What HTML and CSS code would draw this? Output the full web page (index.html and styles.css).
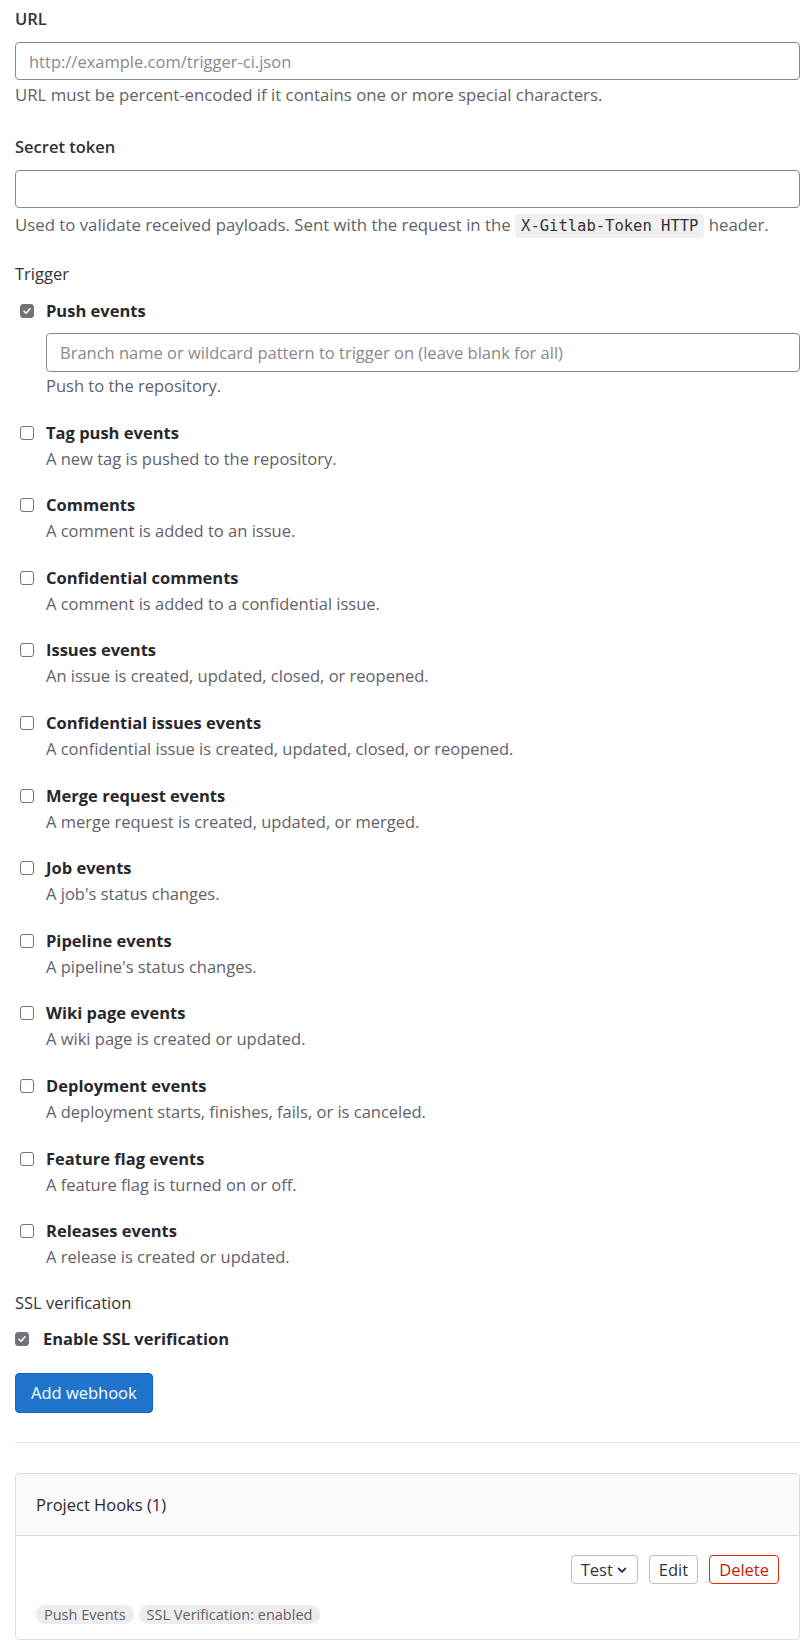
FILE: index.html
```html
<!DOCTYPE html>
<html lang="en">

<head>
    <meta charset="UTF-8">
    <meta name="viewport" content="width=device-width, initial-scale=1.0">
    <title>Webhooks</title>
    <link rel="stylesheet" href="styles.css">
</head>

<body>

    <form class="hook-form">
        <div class="form-group">
            <label class="label" for="url">URL</label>
            <input class="input" type="text" id="url" placeholder="http://example.com/trigger-ci.json">
            <p class="help">URL must be percent-encoded if it contains one or more special characters.</p>
        </div>

        <div class="form-group">
            <label class="label" for="token">Secret token</label>
            <input class="input" type="text" id="token">
            <p class="help">Used to validate received payloads. Sent with the request in the <code>X-Gitlab-Token HTTP</code> header.</p>
        </div>

        <div class="form-group triggers">
            <div class="label">Trigger</div>

            <div class="trigger">
                <input class="check" type="checkbox" id="push" checked>
                <label class="trigger-title" for="push">Push events</label>
                <input class="input branch" type="text" placeholder="Branch name or wildcard pattern to trigger on (leave blank for all)">
                <p class="trigger-desc">Push to the repository.</p>
            </div>

            <div class="trigger">
                <input class="check" type="checkbox" id="tag">
                <label class="trigger-title" for="tag">Tag push events</label>
                <p class="trigger-desc">A new tag is pushed to the repository.</p>
            </div>

            <div class="trigger">
                <input class="check" type="checkbox" id="note">
                <label class="trigger-title" for="note">Comments</label>
                <p class="trigger-desc">A comment is added to an issue.</p>
            </div>

            <div class="trigger">
                <input class="check" type="checkbox" id="conf-note">
                <label class="trigger-title" for="conf-note">Confidential comments</label>
                <p class="trigger-desc">A comment is added to a confidential issue.</p>
            </div>

            <div class="trigger">
                <input class="check" type="checkbox" id="issues">
                <label class="trigger-title" for="issues">Issues events</label>
                <p class="trigger-desc">An issue is created, updated, closed, or reopened.</p>
            </div>

            <div class="trigger">
                <input class="check" type="checkbox" id="conf-issues">
                <label class="trigger-title" for="conf-issues">Confidential issues events</label>
                <p class="trigger-desc">A confidential issue is created, updated, closed, or reopened.</p>
            </div>

            <div class="trigger">
                <input class="check" type="checkbox" id="mr">
                <label class="trigger-title" for="mr">Merge request events</label>
                <p class="trigger-desc">A merge request is created, updated, or merged.</p>
            </div>

            <div class="trigger">
                <input class="check" type="checkbox" id="job">
                <label class="trigger-title" for="job">Job events</label>
                <p class="trigger-desc">A job's status changes.</p>
            </div>

            <div class="trigger">
                <input class="check" type="checkbox" id="pipeline">
                <label class="trigger-title" for="pipeline">Pipeline events</label>
                <p class="trigger-desc">A pipeline's status changes.</p>
            </div>

            <div class="trigger">
                <input class="check" type="checkbox" id="wiki">
                <label class="trigger-title" for="wiki">Wiki page events</label>
                <p class="trigger-desc">A wiki page is created or updated.</p>
            </div>

            <div class="trigger">
                <input class="check" type="checkbox" id="deploy">
                <label class="trigger-title" for="deploy">Deployment events</label>
                <p class="trigger-desc">A deployment starts, finishes, fails, or is canceled.</p>
            </div>

            <div class="trigger">
                <input class="check" type="checkbox" id="flag">
                <label class="trigger-title" for="flag">Feature flag events</label>
                <p class="trigger-desc">A feature flag is turned on or off.</p>
            </div>

            <div class="trigger">
                <input class="check" type="checkbox" id="release">
                <label class="trigger-title" for="release">Releases events</label>
                <p class="trigger-desc">A release is created or updated.</p>
            </div>
        </div>

        <div class="form-group ssl">
            <div class="label">SSL verification</div>
            <div class="ssl-row">
                <input class="check" type="checkbox" id="ssl" checked>
                <label class="trigger-title" for="ssl">Enable SSL verification</label>
            </div>
        </div>

        <button class="btn-primary" type="submit">Add webhook</button>
    </form>

    <hr class="divider">

    <div class="card">
        <div class="card-header">Project Hooks (1)</div>
        <div class="card-body">
            <div class="hook-actions">
                <button class="btn" type="button">Test
                    <svg class="chevron" width="12" height="12" viewBox="0 0 16 16"><path d="M3.5 6 8 10.5 12.5 6" fill="none" stroke="currentColor" stroke-width="2.4" stroke-linecap="round" stroke-linejoin="round"/></svg>
                </button>
                <button class="btn" type="button">Edit</button>
                <button class="btn btn-danger" type="button">Delete</button>
            </div>
            <div class="badges">
                <span class="badge">Push Events</span>
                <span class="badge">SSL Verification: enabled</span>
            </div>
        </div>
    </div>

</body>

</html>
```

FILE: styles.css
```css
body {
    font-family: "Open Sans", Arial, sans-serif;
    font-size: 16.5px;
    line-height: 24px;
    color: #333238;
    margin: 0;
    padding: 7px 10px 0 15px;
}

p {
    margin: 0;
}

.form-group {
    margin-bottom: 28px;
}

.label {
    display: block;
    font-weight: 600;
    margin-bottom: 11px;
}

.input {
    box-sizing: border-box;
    display: block;
    width: 100%;
    height: 38px;
    padding: 0 13px;
    font-family: inherit;
    font-size: 16.5px;
    color: #333238;
    border: 1px solid #89888d;
    border-radius: 4px;
    outline: none;
}

.input::placeholder {
    color: #89888d;
}

.help {
    margin-top: 3px;
    color: #626168;
    font-size: 16.8px;
}

code {
    display: inline-block;
    font-family: "DejaVu Sans Mono", monospace;
    font-size: 15.5px;
    line-height: 24px;
    padding: 0 6px;
    margin: 3px 0 0;
    background: #f0f0f0;
    border-radius: 4px;
    color: #333238;
}

.triggers {
    margin-top: -4px;
    margin-bottom: 0;
}

.triggers .label,
.ssl .label {
    font-weight: 400;
}

.triggers .label {
    margin-bottom: 13px;
}

.trigger {
    display: grid;
    grid-template-columns: 31px 1fr;
    margin-bottom: 22.6px;
}

.check {
    appearance: none;
    box-sizing: border-box;
    width: 14px;
    height: 14px;
    margin: 5px 0 0 5px;
    border: 1px solid #737278;
    border-radius: 3px;
    background: #fff;
}

.check:checked {
    background: #737278 no-repeat center / 10px 10px;
    background-image: url("data:image/svg+xml,%3Csvg xmlns='http://www.w3.org/2000/svg' viewBox='0 0 10 10'%3E%3Cpath d='M2 5.2 4.1 7.3 8 2.8' fill='none' stroke='white' stroke-width='1.6' stroke-linecap='round' stroke-linejoin='round'/%3E%3C/svg%3E");
}

.trigger-title {
    grid-column: 2;
    font-weight: 700;
    color: #28272d;
}

.trigger-desc,
.trigger .branch {
    grid-column: 2;
}

.trigger-desc {
    margin-top: 2px;
    color: #626168;
}

.trigger .branch {
    margin-top: 10px;
    height: 39px;
}

.ssl {
    margin-top: -1px;
    margin-bottom: 22px;
}

.ssl .label {
    margin-bottom: 12px;
}

.ssl-row {
    display: grid;
    grid-template-columns: 28px 1fr;
}

.ssl-row .check {
    margin-left: 0;
}

.btn-primary {
    display: block;
    height: 40px;
    padding: 0 15px;
    font-family: inherit;
    font-size: 16.5px;
    color: #fff;
    background-color: #1f75cb;
    border: 1px solid #1068bf;
    border-radius: 4px;
    cursor: pointer;
}

.divider {
    border: none;
    border-top: 1px solid #e8e8e8;
    margin: 29px 0 30px;
}

.card {
    border: 1px solid #dcdcde;
    border-radius: 4px;
}

.card-header {
    padding: 19px 20px 18px;
    background: #fafafa;
    border-bottom: 1px solid #dcdcde;
    border-radius: 4px 4px 0 0;
    font-weight: 500;
    color: #28272d;
}

.card-body {
    padding: 19px 20px 15px;
}

.hook-actions {
    display: flex;
    justify-content: flex-end;
    gap: 11px;
}

.btn {
    display: inline-flex;
    align-items: center;
    gap: 3px;
    height: 29px;
    padding: 0 9px;
    font-family: inherit;
    font-size: 16.5px;
    color: #333238;
    background: #fff;
    border: 1px solid #bfbfc3;
    border-radius: 4px;
    cursor: pointer;
}

.btn-danger {
    color: #c91c00;
    border-color: #dd2b0e;
}

.chevron {
    margin-top: 1px;
}

.badges {
    display: flex;
    gap: 5px;
    margin-top: 21px;
}

.badge {
    padding: 0 8px;
    font-size: 14.5px;
    line-height: 19px;
    color: #626168;
    background: #ececef;
    border-radius: 10px;
}
```
